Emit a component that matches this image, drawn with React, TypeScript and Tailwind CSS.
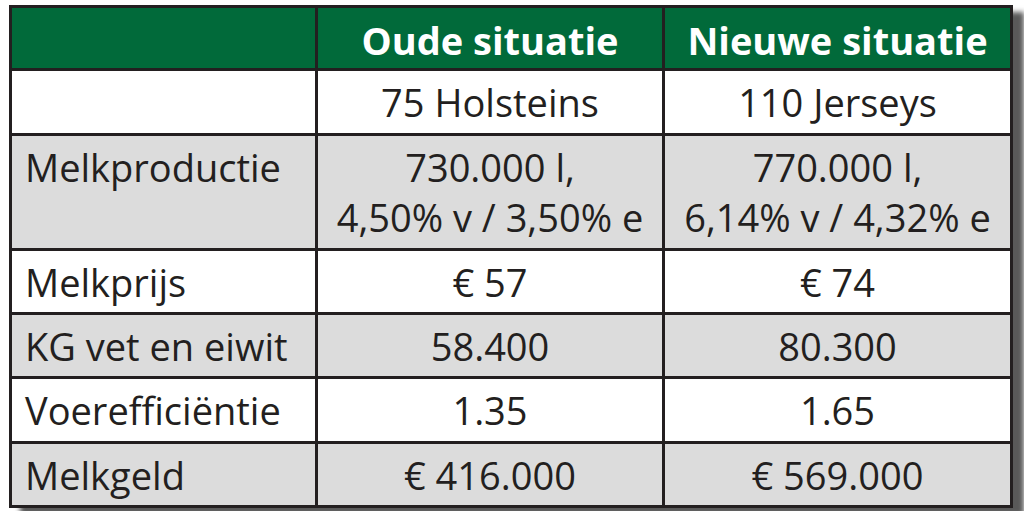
const rows = [
  { label: "", oud: ["75 Holsteins"], nieuw: ["110 Jerseys"], gray: false, h: "h-[62px]" },
  {
    label: "Melkproductie",
    oud: ["730.000 l,", "4,50% v / 3,50% e"],
    nieuw: ["770.000 l,", "6,14% v / 4,32% e"],
    gray: true,
    h: "h-[112px]",
  },
  { label: "Melkprijs", oud: ["€ 57"], nieuw: ["€ 74"], gray: false, h: "h-[61px]" },
  { label: "KG vet en eiwit", oud: ["58.400"], nieuw: ["80.300"], gray: true, h: "h-[61px]" },
  { label: "Voerefficiëntie", oud: ["1.35"], nieuw: ["1.65"], gray: false, h: "h-[62px]" },
  { label: "Melkgeld", oud: ["€ 416.000"], nieuw: ["€ 569.000"], gray: true, h: "h-[61px]" },
];

type CellProps = { lines: string[]; gray: boolean; multi: boolean; h: string; left?: boolean };

const Cell = ({ lines, gray, multi, h, left }: CellProps) => (
  <div
    className={`${h} ${gray ? "bg-[#dcdcdc]" : "bg-white"} flex flex-col ${
      multi ? "justify-start pt-[6px]" : "justify-center"
    } ${left ? "items-start pl-[13px]" : "items-center"}`}
  >
    {lines.map((l, i) => (
      <span key={i} className="leading-[50px] whitespace-nowrap">
        {l}
      </span>
    ))}
  </div>
);

export default function App() {
  return (
    <div className="w-[1024px] h-[511px] bg-white pt-[5px] pl-[9px] overflow-hidden">
      <div
        className="w-[1004px] grid grid-cols-[303px_344px_345px] gap-[3px] p-[3px] bg-[#231f20] text-[#231f20] text-[38px] shadow-[11px_7px_5px_rgba(0,0,0,0.65)]"
        style={{ fontFamily: '"Open Sans", "Noto Sans", sans-serif' }}
      >
        <div className="h-[60px] bg-[#016a3a]" />
        <div className="h-[60px] bg-[#016a3a] flex items-center justify-center text-white font-bold pt-[4px]">
          Oude situatie
        </div>
        <div className="h-[60px] bg-[#016a3a] flex items-center justify-center text-white font-bold pt-[4px]">
          Nieuwe situatie
        </div>
        {rows.map((r, i) => {
          const multi = r.oud.length > 1;
          return [
            <Cell key={`l${i}`} lines={r.label ? [r.label] : []} gray={r.gray} multi={multi} h={r.h} left />,
            <Cell key={`o${i}`} lines={r.oud} gray={r.gray} multi={multi} h={r.h} />,
            <Cell key={`n${i}`} lines={r.nieuw} gray={r.gray} multi={multi} h={r.h} />,
          ];
        })}
      </div>
    </div>
  );
}
